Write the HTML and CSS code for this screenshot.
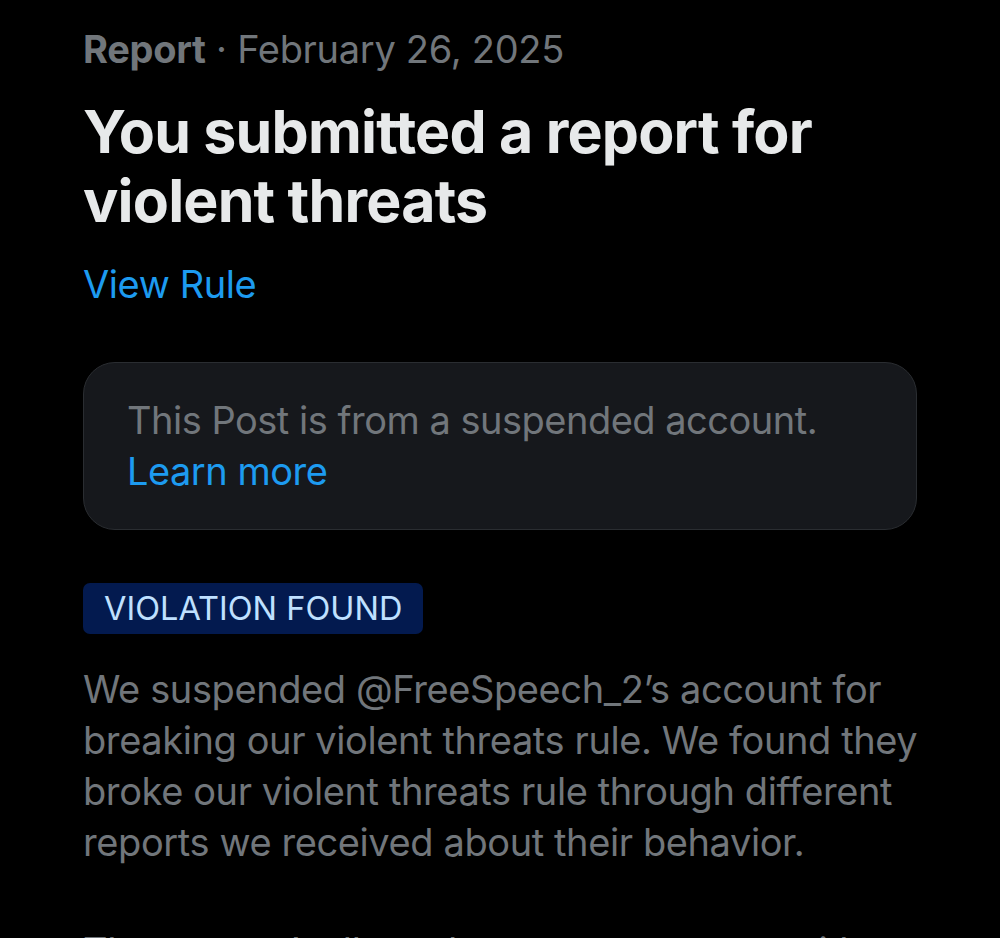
FILE: index.html
```html
<!DOCTYPE html>
<html lang="en">
<head>
    <meta charset="UTF-8">
    <meta name="viewport" content="width=device-width, initial-scale=1.0">
    <title>Report</title>
    <link rel="stylesheet" href="styles.css">
</head>
<body>

    <main class="report">
        <!-- Header -->
        <p class="meta"><strong>Report</strong> · February 26, 2025</p>
        <h1 class="title">You submitted a report for violent threats</h1>
        <a class="rule-link" href="#">View Rule</a>

        <!-- Reported post -->
        <div class="notice">
            <p>This Post is from a suspended account.<br><a href="#">Learn more</a></p>
        </div>

        <!-- Outcome -->
        <span class="badge">VIOLATION FOUND</span>
        <div class="details">
            <p>We suspended @FreeSpeech_2’s account for breaking our violent threats rule. We found they broke our violent threats rule through different reports we received about their behavior.</p>
            <p>They weren’t allowed to post or engage with others while their account was under review.</p>
        </div>
    </main>

</body>
</html>
```

FILE: styles.css
```css
* {
    margin: 0;
    padding: 0;
    box-sizing: border-box;
}

body {
    font-family: 'Inter', 'Noto Sans', sans-serif;
    background-color: #000;
    color: #71767b;
    overflow: hidden;
}

a {
    color: #1d9bf0;
    text-decoration: none;
}

.report {
    display: flex;
    flex-direction: column;
    align-items: flex-start;
    width: 917px;
    padding: 25px 0 0 83px;
}

.meta {
    font-size: 38px;
    line-height: 48px;
    letter-spacing: -0.3px;
}

.meta strong {
    font-weight: 700;
}

.title {
    margin-top: 24px;
    font-size: 59px;
    line-height: 69px;
    font-weight: 700;
    color: #e7e9ea;
    letter-spacing: -0.8px;
}

.rule-link {
    margin-top: 25px;
    font-size: 38px;
    line-height: 48px;
    letter-spacing: -0.4px;
}

.notice {
    align-self: stretch;
    margin-top: 54px;
    padding: 32px 43px;
    background-color: #16181c;
    border: 1px solid #2a2d31;
    border-radius: 32px;
    font-size: 38px;
    line-height: 51px;
    letter-spacing: -0.5px;
}

.badge {
    margin-top: 53px;
    padding: 0 21px;
    background-color: #031a4f;
    color: #bfe0ff;
    border-radius: 7px;
    font-size: 32.5px;
    line-height: 51px;
}

.details {
    width: 842px;
    margin-top: 30px;
    font-size: 38px;
    line-height: 51px;
    letter-spacing: -0.4px;
}

.details p + p {
    margin-top: 58px;
}
```
